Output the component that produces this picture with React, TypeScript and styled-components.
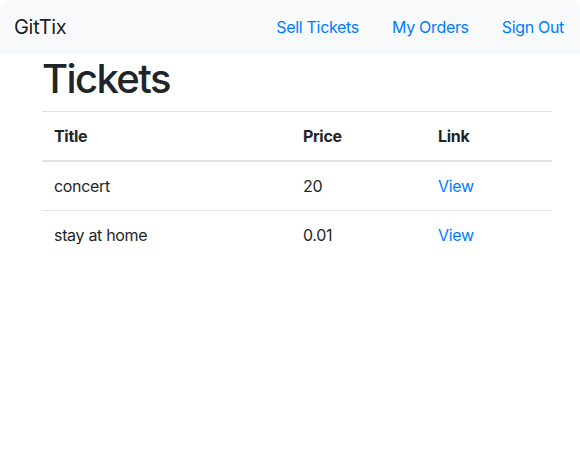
import React from "react";
import styled, { createGlobalStyle } from "styled-components";

const Global = createGlobalStyle`
  html, body { margin: 0; padding: 0; background: #fff; }
  body {
    font-family: Inter, "Noto Sans", "Liberation Sans", sans-serif;
    font-size: 16px;
    line-height: 1.5;
    letter-spacing: -0.02em;
    color: #212529;
  }
  * { box-sizing: border-box; }
`;

const Navbar = styled.nav`
  display: flex;
  align-items: center;
  justify-content: space-between;
  height: 54px;
  padding: 0 16px 0 14px;
  background: #f8f9fa;
  border-radius: 10px 10px 0 0;
`;

const Brand = styled.a`
  font-size: 20px;
  line-height: 30px;
  color: rgba(0, 0, 0, 0.9);
  text-decoration: none;
`;

const NavList = styled.ul`
  display: flex;
  gap: 33px;
  list-style: none;
  margin: 0;
  padding: 0;
`;

const NavLink = styled.a`
  color: #007bff;
  text-decoration: none;
  font-size: 16px;
  line-height: 24px;
`;

const Container = styled.main`
  width: 510px;
  margin-left: 42px;
`;

const Title = styled.h1`
  margin: 1px 0 8px;
  font-size: 40px;
  font-weight: 500;
  line-height: 48px;
  letter-spacing: -0.04em;
`;

const Table = styled.table`
  width: 100%;
  border-collapse: collapse;
`;

const Th = styled.th<{ $w: number }>`
  width: ${(p) => p.$w}px;
  text-align: left;
  font-weight: 700;
  padding: 12px;
  line-height: 24px;
  border-top: 1px solid #dee2e6;
  border-bottom: 2px solid #dee2e6;
`;

const Td = styled.td`
  padding: 12px;
  line-height: 24px;
  border-top: 1px solid #dee2e6;
`;

const Link = styled.a`
  color: #007bff;
  text-decoration: none;
`;

const tickets = [
  { title: "concert", price: "20" },
  { title: "stay at home", price: "0.01" },
];

export default function App() {
  return (
    <>
      <Global />
      <Navbar>
        <Brand href="#">GitTix</Brand>
        <NavList>
          <li><NavLink href="#">Sell Tickets</NavLink></li>
          <li><NavLink href="#">My Orders</NavLink></li>
          <li><NavLink href="#">Sign Out</NavLink></li>
        </NavList>
      </Navbar>
      <Container>
        <Title>Tickets</Title>
        <Table>
          <thead>
            <tr>
              <Th $w={249}>Title</Th>
              <Th $w={135}>Price</Th>
              <Th $w={126}>Link</Th>
            </tr>
          </thead>
          <tbody>
            {tickets.map((t) => (
              <tr key={t.title}>
                <Td>{t.title}</Td>
                <Td>{t.price}</Td>
                <Td><Link href="#">View</Link></Td>
              </tr>
            ))}
          </tbody>
        </Table>
      </Container>
    </>
  );
}
